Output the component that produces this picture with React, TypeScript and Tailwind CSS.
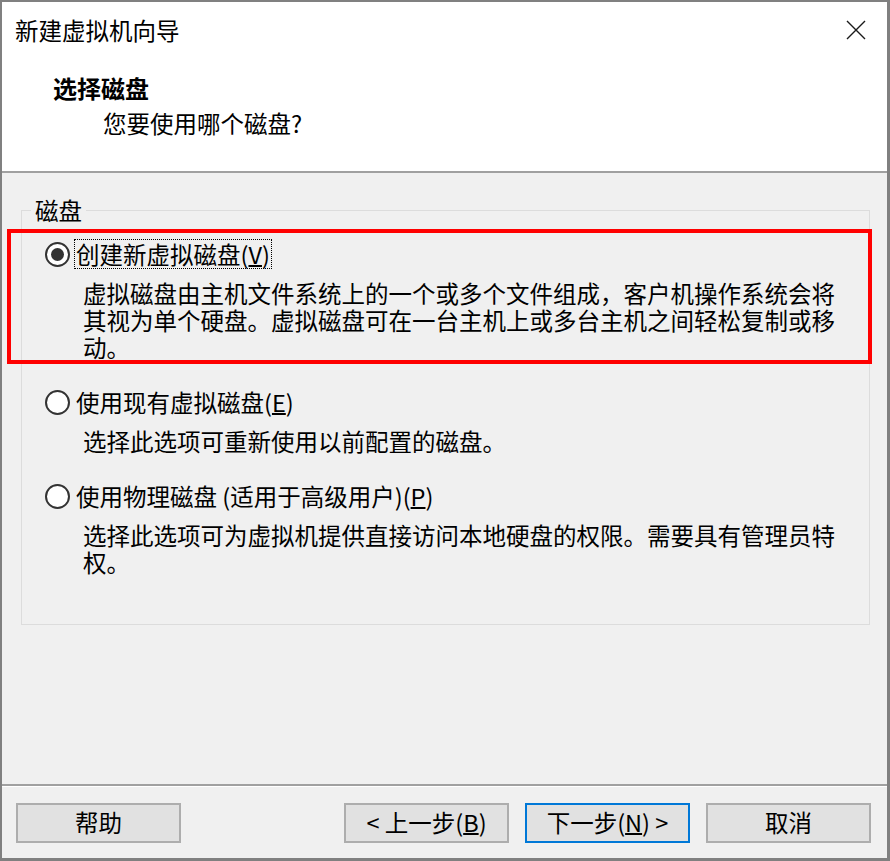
import React from "react";

function Radio({ checked }: { checked?: boolean }) {
  return (
    <div className="w-[25px] h-[25px] shrink-0 rounded-full border-[2.5px] border-[#333333] bg-white flex items-center justify-center">
      {checked && <div className="w-[13px] h-[13px] rounded-full bg-[#333333]" />}
    </div>
  );
}

function Option({
  checked,
  label,
  mnemonic,
  suffix,
  lines,
  focused,
  className,
}: {
  checked?: boolean;
  label: string;
  mnemonic: string;
  suffix?: string;
  lines: string[];
  focused?: boolean;
  className?: string;
}) {
  return (
    <div className={className}>
      <div className="flex items-center h-[30px]">
        <Radio checked={checked} />
        <span
          className={
            "ml-[4px] px-[1px] h-[30px] leading-[28px] border " +
            (focused ? "border-dotted border-black" : "border-transparent")
          }
        >
          {label}(<span className="underline underline-offset-1">{mnemonic}</span>){suffix}
        </span>
      </div>
      <div className="ml-[38px] mt-[11px] leading-[27px]">
        {lines.map((l, i) => (
          <div key={i} className="whitespace-nowrap">
            {l}
          </div>
        ))}
      </div>
    </div>
  );
}

function Btn({ children, primary }: { children: React.ReactNode; primary?: boolean }) {
  return (
    <div
      className={
        "w-[165px] h-[40px] border-2 bg-[#e1e1e1] flex items-center justify-center leading-none " +
        (primary ? "border-[#0078d7]" : "border-[#adadad]")
      }
    >
      {children}
    </div>
  );
}

export default function App() {
  return (
    <div className="w-[890px] h-[861px] border-l-2 border-t-2 border-r-[3px] border-b-[3px] border-[#808080] bg-[#f0f0f0] flex flex-col text-black text-[23.5px] font-['Noto_Sans_CJK_SC','Microsoft_YaHei',sans-serif]">
      {/* header */}
      <div className="h-[171px] shrink-0 bg-white border-b-2 border-[#a0a0a0]">
        <div className="h-[56px] flex items-center justify-between pl-[13px] pr-[21px]">
          <span className="leading-[30px]">新建虚拟机向导</span>
          <svg width="20" height="20" viewBox="0 0 20 20">
            <path d="M1 1 L19 19 M19 1 L1 19" stroke="#1a1a1a" strokeWidth="1.4" fill="none" />
          </svg>
        </div>
        <div className="mt-[15px] pl-[51px] leading-[30px] font-bold text-[24px]">选择磁盘</div>
        <div className="mt-[5px] pl-[101px] leading-[30px]">您要使用哪个磁盘?</div>
      </div>

      {/* body */}
      <div className="flex-1 min-h-0">
        <div className="relative mt-[37px] ml-[19px] w-[849px] h-[415px] border border-[#dcdcdc] pt-[28px] pl-[23px]">
          <div className="absolute left-[9px] top-[-15px] px-[4px] bg-[#f0f0f0] leading-[28px]">磁盘</div>
          <div className="absolute left-[-15px] top-[18px] w-[865px] h-[135px] border-4 border-[#ff0000]" />
          <Option
            checked
            focused
            label="创建新虚拟磁盘"
            mnemonic="V"
            lines={[
              "虚拟磁盘由主机文件系统上的一个或多个文件组成，客户机操作系统会将",
              "其视为单个硬盘。虚拟磁盘可在一台主机上或多台主机之间轻松复制或移",
              "动。",
            ]}
          />
          <Option
            className="mt-[26px]"
            label="使用现有虚拟磁盘"
            mnemonic="E"
            lines={["选择此选项可重新使用以前配置的磁盘。"]}
          />
          <Option
            className="mt-[26px]"
            label="使用物理磁盘 (适用于高级用户)"
            mnemonic="P"
            lines={[
              "选择此选项可为虚拟机提供直接访问本地硬盘的权限。需要具有管理员特",
              "权。",
            ]}
          />
        </div>
      </div>

      {/* separator */}
      <div className="h-[3px] shrink-0 border-t-2 border-[#a0a0a0] border-b border-b-white" />

      {/* footer */}
      <div className="h-[71px] shrink-0 flex items-start justify-between pt-[16px] pl-[14px] pr-[16px]">
        <Btn>帮助</Btn>
        <div className="flex gap-[16px]">
          <Btn>
            &lt; 上一步(<span className="underline underline-offset-1">B</span>)
          </Btn>
          <Btn primary>
            下一步(<span className="underline underline-offset-1">N</span>) &gt;
          </Btn>
          <Btn>取消</Btn>
        </div>
      </div>
    </div>
  );
}
